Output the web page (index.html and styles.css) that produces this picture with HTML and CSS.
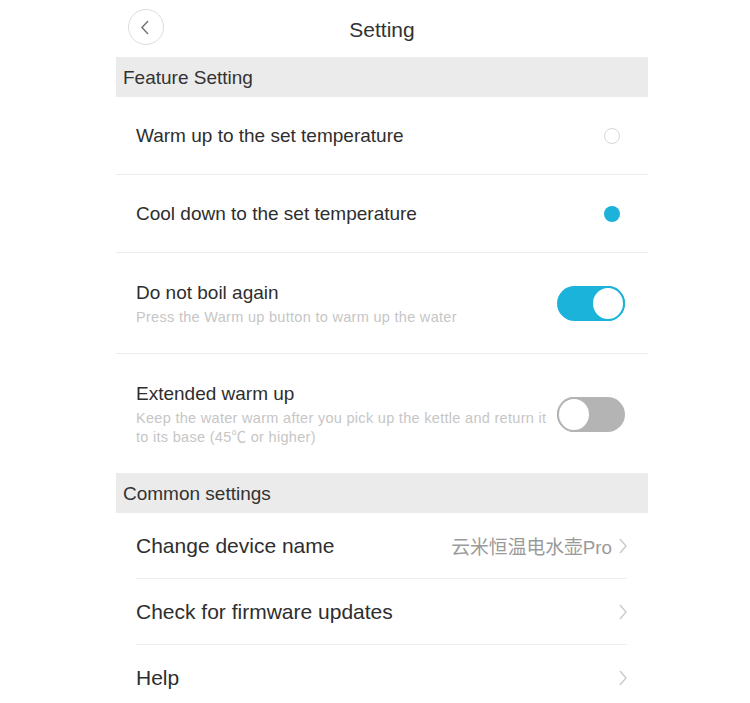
FILE: index.html
```
<!DOCTYPE html>
<html>
<head>
    <meta charset="utf-8" />
    <title>Setting</title>
    <link rel="stylesheet" href="styles.css">
</head>
<body>
    <div class="page">
        <div class="topbar">
            <div class="back">
                <span class="backCircle">
                    <svg width="10" height="15" viewBox="0 0 10 15"><polyline points="8,1 2,7.5 8,14" fill="none" stroke="#777" stroke-width="1.5" /></svg>
                </span>
            </div>
            <div class="title">Setting</div>
            <div></div>
        </div>

        <div class="sectionHead">Feature Setting</div>

        <div class="row">
            <div class="label">Warm up to the set temperature</div>
            <span class="radio"></span>
        </div>
        <div class="row">
            <div class="label">Cool down to the set temperature</div>
            <span class="radio checked"></span>
        </div>
        <div class="row tall">
            <div class="texts">
                <div class="label">Do not boil again</div>
                <div class="hint">Press the Warm up button to warm up the water</div>
            </div>
            <span class="toggle on"><span class="knob"></span></span>
        </div>
        <div class="row tall last">
            <div class="texts">
                <div class="label">Extended warm up</div>
                <div class="hint">Keep the water warm after you pick up the kettle and return it to its base (45℃ or higher)</div>
            </div>
            <span class="toggle"><span class="knob"></span></span>
        </div>

        <div class="sectionHead">Common settings</div>

        <div class="link">
            <div class="label">Change device name</div>
            <div class="value">云米恒温电水壶Pro</div>
            <svg class="arrow" width="8" height="16" viewBox="0 0 8 16"><polyline points="1,1 7,8 1,15" fill="none" stroke="#c8c8c8" stroke-width="1.3" /></svg>
        </div>
        <div class="link">
            <div class="label">Check for firmware updates</div>
            <svg class="arrow" width="8" height="16" viewBox="0 0 8 16"><polyline points="1,1 7,8 1,15" fill="none" stroke="#c8c8c8" stroke-width="1.3" /></svg>
        </div>
        <div class="link">
            <div class="label">Help</div>
            <svg class="arrow" width="8" height="16" viewBox="0 0 8 16"><polyline points="1,1 7,8 1,15" fill="none" stroke="#c8c8c8" stroke-width="1.3" /></svg>
        </div>
    </div>
</body>
</html>
```

FILE: styles.css
```
body {
    margin: 0;
    background: #fff;
    color: #2e2e2e;
    font-family: "Liberation Sans", "Noto Sans CJK SC", sans-serif;
}

.page {
    width: 532px;
    margin-left: 116px;
    display: flex;
    flex-direction: column;
}

.topbar {
    height: 57px;
    display: grid;
    grid-template-columns: 1fr auto 1fr;
    align-items: center;
}

.back {
    padding-left: 12px;
    padding-bottom: 3px;
}

.backCircle {
    width: 36px;
    height: 36px;
    box-sizing: border-box;
    border: 1.5px solid #dcdcdc;
    border-radius: 50%;
    display: flex;
    align-items: center;
    justify-content: center;
    padding-right: 2px;
}

.title {
    font-size: 21px;
    color: #333;
    padding-top: 3px;
}

.sectionHead {
    height: 40px;
    line-height: 42px;
    padding-left: 7px;
    background: #ebebeb;
    font-size: 19px;
    color: #333;
}

.row {
    min-height: 77px;
    display: flex;
    align-items: center;
    justify-content: space-between;
    padding-left: 20px;
    padding-right: 23px;
    border-bottom: 1px solid #ececec;
}

.row.tall {
    padding-top: 27px;
    padding-bottom: 26px;
    min-height: 0;
}

.row.last {
    border-bottom: none;
}

.label {
    font-size: 19px;
    line-height: 24px;
    padding-top: 1px;
}

.texts {
    display: flex;
    flex-direction: column;
    gap: 3px;
    max-width: 416px;
}

.hint {
    font-size: 14.5px;
    line-height: 19px;
    letter-spacing: 0.3px;
    color: #c6c6c6;
}

.radio {
    width: 16px;
    height: 16px;
    box-sizing: border-box;
    border: 1.5px solid #d6d6d6;
    border-radius: 50%;
    margin-right: 5px;
}

.radio.checked {
    border: none;
    background: #1cb2da;
}

.toggle {
    width: 68px;
    height: 35px;
    border-radius: 18px;
    background: #b4b4b4;
    display: flex;
    flex-shrink: 0;
}

.toggle.on {
    background: #1cb3da;
    justify-content: flex-end;
}

.knob {
    width: 34px;
    height: 35px;
    box-sizing: border-box;
    border: 2px solid #b4b4b4;
    border-radius: 50%;
    background: #fff;
}

.toggle.on .knob {
    border-color: #1cb3da;
}

.link {
    height: 65px;
    margin: 0 21px 0 20px;
    display: flex;
    align-items: center;
    border-bottom: 1px solid #efefef;
}

.link .label {
    flex: 1;
    font-size: 21px;
}

.value {
    font-size: 18.8px;
    color: #9a9a9a;
    margin-right: 7px;
}

.arrow {
    display: block;
}
```
